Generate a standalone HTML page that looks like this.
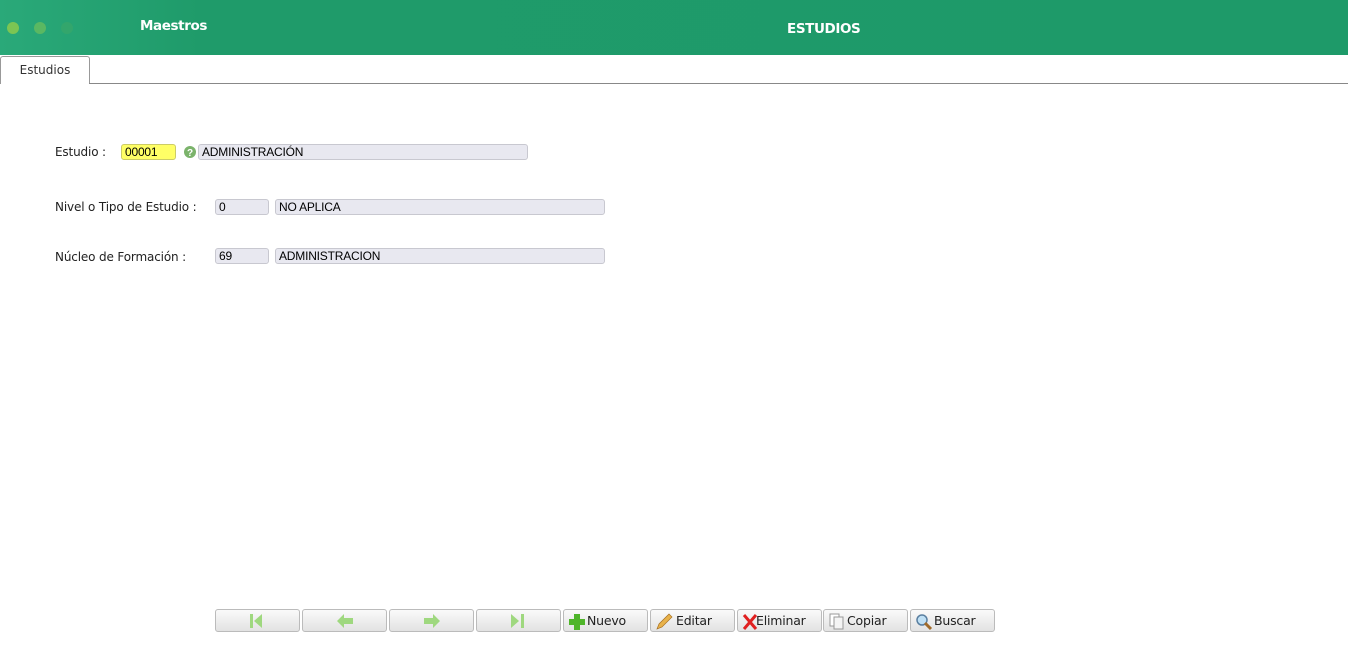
<!DOCTYPE html>
<html><head><meta charset="utf-8"><style>
*{box-sizing:border-box;margin:0;padding:0}
body{width:1348px;height:657px;background:#fff;font-family:"Liberation Sans",sans-serif;position:relative;overflow:hidden}
.hdr{position:absolute;left:0;top:0;width:1348px;height:55px;background:linear-gradient(90deg,#2aa979 0,#1f9b6a 200px,#1e9a69 100%)}
.dot{position:absolute;top:22px;width:12px;height:12px;border-radius:50%}
.t{position:absolute;color:#fff;font-weight:bold;font-family:"DejaVu Sans","Liberation Sans",sans-serif}
.tab{position:absolute;left:0;top:56px;width:90px;height:28px;border:1px solid #999;border-bottom:none;border-radius:3px 3px 0 0;background:#fff;font-size:12px;color:#333;text-align:center;line-height:27px;font-family:"DejaVu Sans",sans-serif}
.line{position:absolute;left:89px;top:83px;width:1259px;height:1px;background:#888}
.lbl{position:absolute;font-size:12px;color:#222;font-family:"DejaVu Sans",sans-serif;letter-spacing:-0.15px}
.in{position:absolute;height:16px;border:1px solid #c8c8d0;border-radius:3px;background:#e8e8f0;font-size:12px;line-height:14px;padding-left:3px;color:#000;letter-spacing:-0.2px}
.btn{position:absolute;top:609px;width:85px;height:23px;border:1px solid #bbb;border-radius:3px;background:linear-gradient(#fafafa,#e2e2e2);font-size:12.5px;line-height:21px;color:#222;font-family:"DejaVu Sans",sans-serif;letter-spacing:-0.2px}
.btn svg{position:absolute;top:3px}
</style></head><body>
<div class="hdr">
<div class="dot" style="left:7px;background:#7cc553"></div>
<div class="dot" style="left:34px;background:#5ab862"></div>
<div class="dot" style="left:61px;background:#33a66c"></div>
<div class="t" style="left:140px;top:18px;font-size:13.5px;letter-spacing:-0.4px">Maestros</div>
<div class="t" style="left:787px;top:21px;font-size:13.5px;letter-spacing:-0.4px">ESTUDIOS</div>
</div>
<div class="tab">Estudios</div>
<div class="line"></div>

<div class="lbl" style="left:55px;top:145px">Estudio :</div>
<div class="in" style="left:121px;top:144px;width:55px;background:#ffff66;border-color:#cc6">00001</div>
<svg style="position:absolute;left:183px;top:145px" width="14" height="14"><circle cx="7" cy="7" r="6" fill="#7bb36b"/><text x="7" y="11" font-size="10" font-weight="bold" fill="#fff" text-anchor="middle" font-family="Liberation Sans">?</text></svg>
<div class="in" style="left:198px;top:144px;width:330px">ADMINISTRACIÓN</div>

<div class="lbl" style="left:55px;top:200px">Nivel o Tipo de Estudio :</div>
<div class="in" style="left:215px;top:199px;width:54px">0</div>
<div class="in" style="left:275px;top:199px;width:330px">NO APLICA</div>

<div class="lbl" style="left:55px;top:250px">Núcleo de Formación :</div>
<div class="in" style="left:215px;top:248px;width:54px">69</div>
<div class="in" style="left:275px;top:248px;width:330px">ADMINISTRACION</div>

<div class="btn" style="left:215px"><svg style="left:33px" width="18" height="16"><rect x="1" y="1" width="3" height="14" fill="#9fd87f"/><path d="M5 8 L13 1 V15Z" fill="#9fd87f"/></svg></div>
<div class="btn" style="left:302px"><svg style="left:33px" width="18" height="16"><path d="M1 8 L8 1 V5 H17 V11 H8 V15Z" fill="#9fd87f"/></svg></div>
<div class="btn" style="left:389px"><svg style="left:33px" width="18" height="16"><path d="M17 8 L10 1 V5 H1 V11 H10 V15Z" fill="#9fd87f"/></svg></div>
<div class="btn" style="left:476px"><svg style="left:33px" width="18" height="16"><path d="M1 1 L9 8 L1 15Z" fill="#9fd87f"/><rect x="11" y="1" width="3" height="14" fill="#9fd87f"/></svg></div>
<div class="btn" style="left:563px"><svg style="left:4px" width="18" height="18"><path d="M6 1H12V6H17V12H12V17H6V12H1V6H6Z" fill="#4fb52a"/></svg><span style="position:absolute;left:23px">Nuevo</span></div>
<div class="btn" style="left:650px"><svg style="left:4px" width="18" height="18"><path d="M2 16 L4 11 L14 1 L17 4 L7 14Z" fill="#e8b24a" stroke="#a87020" stroke-width="0.7"/></svg><span style="position:absolute;left:25px">Editar</span></div>
<div class="btn" style="left:737px"><svg style="left:4px" width="16" height="18"><path d="M2 2L14 16M14 2L2 16" stroke="#e02020" stroke-width="3"/></svg><span style="position:absolute;left:18px">Eliminar</span></div>
<div class="btn" style="left:823px"><svg style="left:5px" width="16" height="18"><rect x="1" y="1" width="9" height="12" fill="#fff" stroke="#999"/><rect x="5" y="4" width="9" height="12" fill="#f4f4f4" stroke="#999"/></svg><span style="position:absolute;left:23px">Copiar</span></div>
<div class="btn" style="left:910px"><svg style="left:4px" width="18" height="18"><circle cx="7" cy="7" r="5" fill="#bfe0f5" stroke="#5a7fa0" stroke-width="1.5"/><path d="M10 10L16 16" stroke="#a06a2a" stroke-width="3"/></svg><span style="position:absolute;left:23px">Buscar</span></div>
</body></html>
